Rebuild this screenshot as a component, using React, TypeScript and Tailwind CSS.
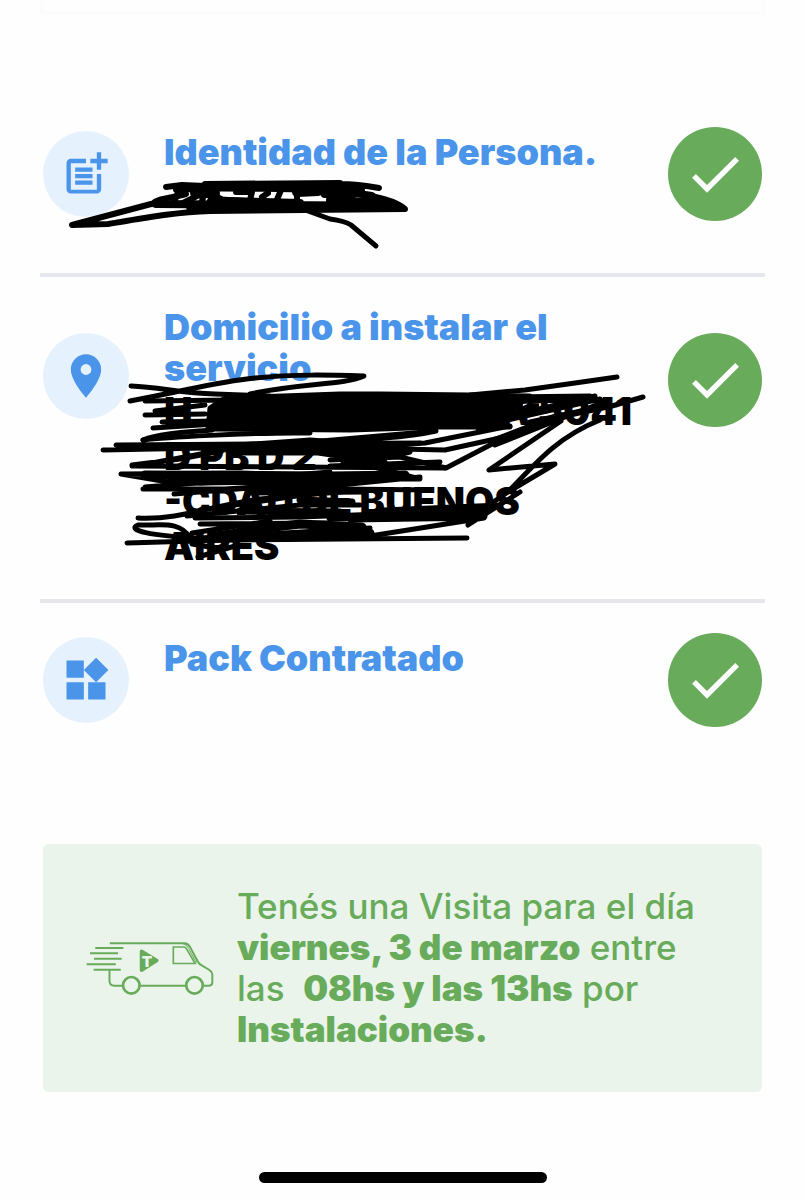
import type { ReactNode } from 'react'
import { MdCheck, MdLocationOn, MdPostAdd, MdWidgets } from 'react-icons/md'

type RowProps = {
    icon: ReactNode
    title: string
    iconClass?: string
    titleClass?: string
    checkClass?: string
    className?: string
    scribble?: ReactNode
    children?: ReactNode
}

function Row({ icon, title, iconClass = '', titleClass = '', checkClass = '', className = '', scribble, children }: RowProps) {
    return (
        <li className={`relative flex items-start px-[3px] pt-[30px] ${className}`}>
            <div className={`flex size-[86px] shrink-0 items-center justify-center rounded-full bg-[#e5f2fd] text-[#4a94ea] ${iconClass}`}>
                {icon}
            </div>
            <div className={`ml-[35px] min-w-0 flex-1 ${titleClass}`}>
                <h2 className="text-[36px] leading-[41px] font-black text-[#4a94ea]">{title}</h2>
                {children}
            </div>
            <div className={`flex size-[94px] shrink-0 items-center justify-center rounded-full bg-[#67ab5b] text-white ${checkClass}`}>
                <MdCheck size={64} />
            </div>
            {scribble}
        </li>
    )
}

function IdScribble() {
    return (
        <svg
            viewBox="40 97 725 176"
            preserveAspectRatio="xMinYMin meet"
            className="pointer-events-none absolute top-0 left-0 w-full overflow-visible"
            fill="none"
            stroke="#000"
            strokeWidth="6"
            strokeLinecap="round"
            strokeLinejoin="round"
            aria-hidden="true"
        >
            <path d="M152 204C158 198 172 198 186 194M166 187L182 185L205 186L340 184C356 184 368 186 379 188M205 184L340 183" />
            <path d="M176 190C210 186 260 190 362 190M151 204L72 225L108 224C150 217 178 212 210 211L405 209C396 201 380 197 355 194" />
            <path strokeWidth="8" d="M156 204L398 206M190 207L395 207M226 201L300 203M330 200L385 203M208 187L350 187" />
            <path d="M180 188L174 202M190 189L201 194L183 203M207 186L202 201M216 196L228 203M281 190L276 202M297 190L297 203M345 191L372 195L388 206" />
            <path strokeWidth="10" d="M195 193L215 193M212 201L245 203M297 192L318 191M325 193L352 194" />
            <path d="M236 192L252 192L250 200M262 197L268 193" />
            <path strokeWidth="5" d="M308 211L330 219Q345 221 351 225L376 246" />
        </svg>
    )
}

function AddressScribble() {
    return (
        <svg
            viewBox="40 277 725 323"
            preserveAspectRatio="xMinYMin meet"
            className="pointer-events-none absolute top-0 left-0 w-full overflow-visible"
            fill="none"
            stroke="#000"
            strokeWidth="5"
            strokeLinecap="round"
            strokeLinejoin="round"
            aria-hidden="true"
        >
            <path d="M131 386C160 387 180 393 215 394L270 396M130 401C190 390 215 382 255 378C295 374 330 375 364 376C345 385 300 383 250 394" />
            <path d="M145 415L205 414M155 411L205 405M162 422L215 421M153 428L215 424M145 401L590 396M143 440C160 433 190 432 212 430" />
            {/* first address line */}
            <path
                fill="#000"
                d="M210 408L225 398L340 394L380 394L470 395L530 396L514 408L500 425L510 427L440 427L350 430L208 429Z"
            />
            <path d="M470 395L525 390L575 383L617 377M465 407L530 400L600 401M500 418L595 396M490 424L600 399M530 422L604 406" />
            <path d="M643 397L612 406L570 415L495 445M604 402L560 419L500 438L445 450L400 449M350 448L425 443L510 426" />
            <path strokeWidth="8" d="M495 441L560 416M480 430L535 405M510 400L590 398" />
            <path d="M561 421L489 470L555 464L508 492L470 518M600 420C560 436 540 458 508 492M560 418L494 443L446 468L400 457L330 460" />
            <path d="M143 440C160 438 250 432 310 433M310 442L436 431C400 439 350 440 290 443M103 450L300 446M116 445L420 443" />
            {/* second address line */}
            <path fill="#000" d="M225 446L310 440L390 446L410 452L390 457L345 457L318 453L230 453Z" />
            <path d="M132 466C165 462 190 455 230 449M132 465L180 459L222 451M133 466L445 468M330 466L440 462" />
            <path d="M121 474L180 484L340 476M121 474L240 473L420 479L370 466M170 479L330 486L420 477M143 489L225 489L390 478M145 487L330 472" />
            <path strokeWidth="9" d="M145 475L330 476L405 475M200 481L340 479M345 463L383 462" />
            {/* third address line */}
            <path d="M174 494L250 488L430 490M138 518C180 520 210 506 260 499L350 491M195 518L300 517L490 510M200 510L310 494" />
            <path strokeWidth="7" d="M250 492L365 491M300 500L352 502M240 511L340 512M330 518L484 516M384 511L500 506" />
            <path d="M187 516L300 505L360 505M350 520L484 518L370 536M468 525L520 492M468 525L484 514" />
            {/* last address line */}
            <path d="M190 538C180 520 160 526 138 525C126 530 150 536 200 538L370 528M192 533L270 521M200 524L330 523" />
            <path strokeWidth="9" d="M215 538L290 537L370 533M240 531L300 524L362 527M215 536L260 530" />
            <path d="M127 543L230 540L467 538M192 544L215 548M198 557L235 546" />
        </svg>
    )
}

function Van() {
    return (
        <svg viewBox="48 62 387 166" className="w-32 shrink-0" fill="none" stroke="#67ab5b" strokeWidth="6" aria-hidden="true">
            <path d="M120 69H346Q356 69 362 79L386 124Q390 132 398 136L420 149Q430 155 430 166V187Q430 197 420 197H404M349 197H212M159 197H134Q119 197 119 182V149" />
            <path d="M340 70Q352 71 358 84L382 128" strokeWidth="3" />
            <path d="M312 80H344Q349 80 352 86L378 130H312Z" strokeWidth="5" />
            <path d="M76 83H161M60 99H145M72 116H156M50 132H138M71 149H153" />
            <circle cx="185" cy="196" r="25" strokeWidth="8" />
            <circle cx="376" cy="196" r="25" strokeWidth="8" />
            <path d="M216 93L262 121L216 150Z" fill="#67ab5b" strokeWidth="11" strokeLinejoin="round" />
            <text x="232" y="142" textAnchor="middle" fill="#eaf4ea" stroke="none" fontSize="46" fontWeight="900">
                T
            </text>
        </svg>
    )
}

export default function App() {
    return (
        <div className="flex min-h-screen flex-col bg-[#fefefe] px-10 font-['Inter','Liberation_Sans',sans-serif]">
            <div className="h-[15px] border-x-4 border-b-4 border-[#fcfcfc]" />

            <ul className="mt-[82px]">
                <Row
                    icon={<MdPostAdd size={52} />}
                    title="Identidad de la Persona."
                    iconClass="mt-1"
                    titleClass="mt-[5px]"
                    className="border-b-4 border-[#e6e7ec] pb-[52px]"
                    scribble={<IdScribble />}
                />
                <Row
                    icon={<MdLocationOn size={52} />}
                    title="Domicilio a instalar el servicio"
                    iconClass="mt-[26px]"
                    checkClass="mt-[26px]"
                    className="border-b-4 border-[#e6e7ec] pb-[30px]"
                    scribble={<AddressScribble />}
                >
                    <p className="text-[38px] leading-[45px] font-black text-black">
                        <span className="flex justify-between pr-9">
                            <span>H</span>
                            <span>A 5041</span>
                        </span>
                        <span className="block">D PB D 2</span>
                        <span className="block">-CDAD DE BUENOS</span>
                        <span className="block">AIRES</span>
                    </p>
                </Row>
                <Row
                    icon={<MdWidgets size={52} />}
                    title="Pack Contratado"
                    iconClass="mt-1"
                    titleClass="mt-[5px]"
                />
            </ul>

            <section className="mx-[3px] mt-[117px] flex items-center gap-[23px] rounded-md bg-[#eaf4ea] px-[43px] py-[42px]">
                <Van />
                <p className="text-[35px] leading-[41px] font-medium text-[#67ab5b]">
                    Tenés una Visita para el día <b className="font-black">viernes, 3 de marzo</b> entre las &nbsp;
                    <b className="font-black">08hs y las 13hs</b> por <b className="font-black">Instalaciones.</b>
                </p>
            </section>

            <div className="mx-auto mt-auto mb-[17px] h-[11px] w-72 rounded-full bg-black" />
        </div>
    )
}
